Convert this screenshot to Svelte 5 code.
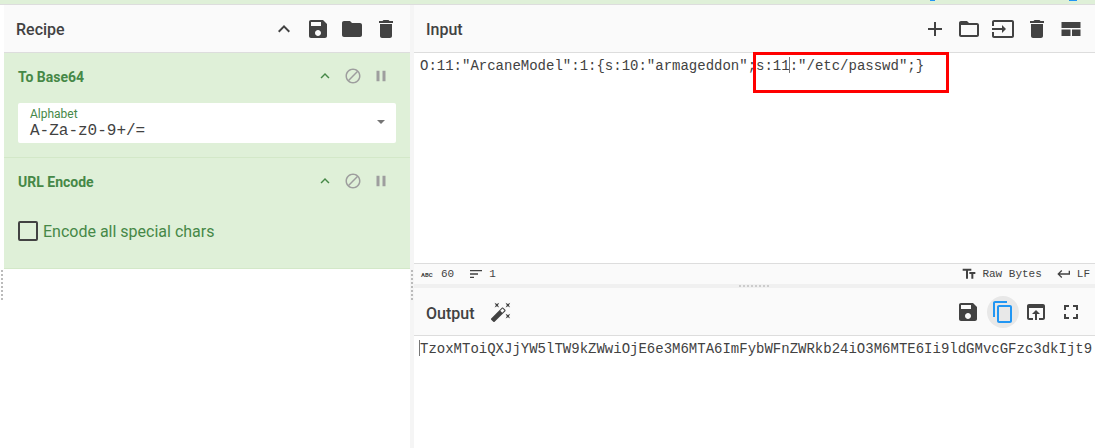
<script>
  const icons = {
    save: 'M17 3H5c-1.11 0-2 .9-2 2v14c0 1.1.89 2 2 2h14c1.1 0 2-.9 2-2V7l-4-4zm-5 16c-1.66 0-3-1.34-3-3s1.34-3 3-3 3 1.34 3 3-1.34 3-3 3zm3-10H5V5h10v4z',
    folder: 'M10 4H4c-1.1 0-1.99.9-1.99 2L2 18c0 1.1.9 2 2 2h16c1.1 0 2-.9 2-2V8c0-1.1-.9-2-2-2h-8l-2-2z',
    folderOpen: 'M20 6h-8l-2-2H4c-1.1 0-1.99.9-1.99 2L2 18c0 1.1.9 2 2 2h16c1.1 0 2-.9 2-2V8c0-1.1-.9-2-2-2zm0 12H4V8h16v10z',
    trash: 'M6 19c0 1.1.9 2 2 2h8c1.1 0 2-.9 2-2V7H6v12zM19 4h-3.5l-1-1h-5l-1 1H5v2h14V4z',
    less: 'M12 8l-6 6 1.41 1.41L12 10.83l4.59 4.58L18 14z',
    block: 'M12 2C6.48 2 2 6.48 2 12s4.48 10 10 10 10-4.48 10-10S17.52 2 12 2zM4 12c0-4.42 3.58-8 8-8 1.85 0 3.55.63 4.9 1.69L5.69 16.9C4.63 15.55 4 13.85 4 12zm8 8c-1.85 0-3.55-.63-4.9-1.69L18.31 7.1C19.37 8.45 20 10.15 20 12c0 4.42-3.58 8-8 8z',
    pause: 'M6 19h4V5H6v14zm8-14v14h4V5h-4z',
    add: 'M19 13h-6v6h-2v-6H5v-2h6V5h2v6h6v2z',
    input: 'M21 3.01H3c-1.1 0-2 .9-2 2V9h2V4.99h18v14.03H3V15H1v4.01c0 1.1.9 1.98 2 1.98h18c1.1 0 2-.88 2-1.98v-14c0-1.11-.9-2-2-2zM11 16l4-4-4-4v3H1v2h10v3z',
    layout: 'M2.5 5h19v6h-19zM2.5 12.5h9V19h-9zM13 12.5h8.5V19H13z',
    copy: 'M16 1H4c-1.1 0-2 .9-2 2v14h2V3h12V1zm3 4H8c-1.1 0-2 .9-2 2v14c0 1.1.9 2 2 2h11c1.1 0 2-.9 2-2V7c0-1.1-.9-2-2-2zm0 16H8V7h11v14z',
    open: 'M19 4H5c-1.11 0-2 .9-2 2v12c0 1.1.89 2 2 2h4v-2H5V8h14v10h-4v2h4c1.1 0 2-.9 2-2V6c0-1.1-.89-2-2-2zm-7 6l-4 4h3v6h2v-6h3l-4-4z',
    full: 'M7 14H5v5h5v-2H7v-3zm-2-4h2V7h3V5H5v5zm12 7h-3v2h5v-5h-2v3zM14 5v2h3v3h2V5h-5z',
    text: 'M2.5 4v3h5v12h3V7h5V4h-13zm19 5h-9v3h3v7h3v-7h3V9z',
    enter: 'M19 7v4H5.83l3.58-3.59L8 6l-6 6 6 6 1.41-1.41L5.83 13H21V7z',
    sort: 'M3 18h6v-2H3v2zM3 6v2h18V6H3zm0 7h12v-2H3v2z',
    wand: 'M7.5 5.6L10 7 8.6 4.5 10 2 7.5 3.4 5 2l1.4 2.5L5 7zm12 9.8L17 14l1.4 2.5L17 19l2.5-1.4L22 19l-1.4-2.5L22 14zM22 2l-2.5 1.4L17 2l1.4 2.5L17 7l2.5-1.4L22 7l-1.4-2.5zm-7.63 5.29c-.39-.39-1.02-.39-1.41 0L1.29 18.96c-.39.39-.39 1.02 0 1.41l2.34 2.34c.39.39 1.02.39 1.41 0L16.7 11.05c.39-.39.39-1.02 0-1.41l-2.33-2.35zm-1.03 5.49l-2.12-2.12 2.44-2.44 2.12 2.12-2.44 2.44z',
  };
</script>

{#snippet icon(name, size = 24, cls = '')}
  <svg class={cls} width={size} height={size} viewBox="0 0 24 24" fill="currentColor"><path d={icons[name]} /></svg>
{/snippet}

{#snippet opControls()}
  <div class="op-controls">
    {@render icon('less', 18, 'op-less')}
    {@render icon('block', 18, 'op-off')}
    {@render icon('pause', 18, 'op-off')}
  </div>
{/snippet}

<div class="top-strip">
  <span class="blip blip-a"></span>
  <span class="blip blip-b"></span>
</div>

<div class="workspace">
  <section class="recipe">
    <header class="title-bar">
      <h2>Recipe</h2>
      <div class="btns recipe-btns">
        {@render icon('less', 24)}
        {@render icon('save', 24)}
        {@render icon('folder', 24)}
        {@render icon('trash', 24)}
      </div>
    </header>

    <div class="op op-first">
      <div class="op-head">
        <span class="op-name">To Base64</span>
        {@render opControls()}
      </div>
      <div class="select">
        <span class="select-label">Alphabet</span>
        <span class="select-value">A-Za-z0-9+/=</span>
        <span class="caret"></span>
      </div>
    </div>

    <div class="op op-second">
      <div class="op-head">
        <span class="op-name">URL Encode</span>
        {@render opControls()}
      </div>
      <label class="check">
        <span class="box"></span>
        <span>Encode all special chars</span>
      </label>
    </div>
    <div class="dots"></div>
  </section>

  <div class="gutter"><div class="dots"></div></div>

  <section class="io">
    <header class="title-bar">
      <h2>Input</h2>
      <div class="btns input-btns">
        {@render icon('add', 24)}
        {@render icon('folderOpen', 24)}
        {@render icon('input', 24)}
        {@render icon('trash', 24)}
        {@render icon('layout', 24)}
      </div>
    </header>

    <div class="editor input-editor">
      <span class="code">O:11:"ArcaneModel":1:&#123;s:10:"armageddon";s:11<span class="cursor"></span>:"/etc/passwd";&#125;</span>
      <div class="highlight"></div>
    </div>

    <div class="status">
      <div class="status-side">
        <span class="abc">ABC</span>
        <span class="stat-num">60</span>
        {@render icon('sort', 16, 'sort')}
        <span>1</span>
      </div>
      <div class="status-side">
        {@render icon('text', 16)}
        <span class="raw">Raw Bytes</span>
        {@render icon('enter', 16)}
        <span>LF</span>
      </div>
    </div>

    <div class="h-gutter"><span class="h-dots"></span></div>

    <header class="title-bar output-bar">
      <div class="output-left">
        <h2>Output</h2>
        {@render icon('wand', 22)}
      </div>
      <div class="btns output-btns">
        {@render icon('save', 24)}
        <span class="copy-btn">{@render icon('copy', 24)}</span>
        {@render icon('open', 24, 'open-icon')}
        {@render icon('full', 24, 'full-icon')}
      </div>
    </header>

    <div class="editor output-editor">
      <span class="code"><span class="cursor"></span>TzoxMToiQXJjYW5lTW9kZWwiOjE6e3M6MTA6ImFybWFnZWRkb24iO3M6MTE6Ii9ldGMvcGFzc3dkIjt9</span>
    </div>
  </section>
</div>

<style>
  :global(body) {
    margin: 0;
    background: #fff;
    overflow: hidden;
  }

  .top-strip {
    position: relative;
    height: 4px;
    background: #dff0d8;
    border-bottom: 1px solid #ddd;
  }
  .blip {
    position: absolute;
    top: 0;
    height: 1px;
    background: #2196f3;
  }
  .blip-a { left: 930px; width: 5px; }
  .blip-b { left: 1069px; width: 8px; }

  .workspace {
    display: grid;
    grid-template-columns: 410px 4px 1fr;
    height: 443px;
    font-family: Roboto, sans-serif;
  }

  .recipe {
    position: relative;
    padding-left: 4px;
    display: flex;
    flex-direction: column;
  }

  .title-bar {
    height: 47px;
    flex: none;
    display: flex;
    align-items: center;
    justify-content: space-between;
    background: #fafafa;
    border-bottom: 1px solid #ddd;
    padding-left: 12px;
    color: #424242;
  }
  h2 {
    margin: 0;
    padding-top: 3px;
    font-size: 16px;
    font-weight: 500;
    color: #424242;
    line-height: 20px;
  }

  .btns { display: flex; align-items: center; }
  .recipe-btns { gap: 10px; padding-right: 12px; }
  .input-btns { gap: 10px; padding-right: 12px; padding-top: 1px; }
  .output-btns { gap: 7px; padding-right: 12px; }
  .output-btns :global(.open-icon) { margin-left: -2px; }
  .output-btns :global(.full-icon) { margin-left: 4px; }
  .output-left { display: flex; align-items: center; gap: 16px; }
  .output-bar h2 { padding-top: 4px; }

  .op {
    background: #dff0d8;
    border-bottom: 1px solid #d3e8c8;
    color: #468847;
  }
  .op-first { height: 104px; }
  .op-second { height: 110px; }

  .op-head {
    display: flex;
    align-items: center;
    justify-content: space-between;
    height: 20px;
    padding: 14px 20px 0 14px;
  }
  .op-name {
    font-size: 14px;
    font-weight: 700;
    color: #468847;
  }
  .op-controls { display: flex; align-items: center; gap: 10px; margin-top: -2px; }
  .op-controls :global(.op-less) { color: #468847; }
  .op-controls :global(.op-off) { color: #9e9e9e; }

  .select {
    position: relative;
    display: flex;
    flex-direction: column;
    margin: 16px 14px 0;
    height: 40px;
    background: #fff;
    border-radius: 2px;
    padding-left: 12px;
    box-sizing: border-box;
  }
  .select-label {
    font-size: 12px;
    line-height: 14px;
    padding-top: 4px;
    color: #468847;
  }
  .select-value {
    font-family: "Liberation Mono", monospace;
    font-size: 16px;
    line-height: 16px;
    padding-top: 2px;
    color: #424242;
  }
  .caret {
    position: absolute;
    right: 11px;
    top: 17px;
    border-left: 4px solid transparent;
    border-right: 4px solid transparent;
    border-top: 4px solid #757575;
  }

  .check {
    display: flex;
    align-items: center;
    gap: 5px;
    margin: 29px 14px 0;
    font-size: 16px;
    color: #468847;
  }
  .box {
    width: 16px;
    height: 16px;
    border: 2px solid #424242;
    border-radius: 2px;
  }

  .dots {
    position: absolute;
    left: 1px;
    top: 265px;
    width: 2px;
    height: 32px;
    background: repeating-linear-gradient(to bottom, #bbb 0 2px, transparent 2px 4px);
  }
  .gutter {
    position: relative;
    background: #f5f5f5;
  }

  .io {
    display: flex;
    flex-direction: column;
    min-width: 0;
  }

  .editor {
    position: relative;
    padding: 2px 6px 0;
    color: #424242;
  }
  .input-editor {
    height: 208px;
    box-sizing: border-box;
    flex: none;
    margin-bottom: 2px;
  }
  .output-editor { flex: 1; }
  .code {
    font-family: "Liberation Mono", monospace;
    font-size: 14px;
    line-height: 19px;
    white-space: pre;
  }
  .cursor {
    display: inline-block;
    width: 1px;
    height: 16px;
    margin-left: -1px;
    background: #777;
    vertical-align: -3px;
  }

  .highlight {
    position: absolute;
    left: 339px;
    top: -1px;
    width: 190px;
    height: 35px;
    border: 3px solid #f00;
  }

  .status {
    height: 20px;
    flex: none;
    display: flex;
    align-items: center;
    justify-content: space-between;
    background: #fafafa;
    border-top: 1px solid #ddd;
    padding: 0 5px 0 7px;
    font-family: "Liberation Mono", monospace;
    font-size: 11px;
    color: #424242;
  }
  .status-side { display: flex; align-items: center; gap: 5px; }
  .abc {
    font-family: Roboto, sans-serif;
    font-size: 6px;
    font-weight: 700;
    width: 15px;
  }
  .stat-num { margin-right: 9px; }
  .raw { margin-right: 9px; }

  .h-gutter {
    height: 4px;
    flex: none;
    background: #f0f0f0;
    display: flex;
    justify-content: center;
    align-items: center;
  }
  .h-dots {
    width: 32px;
    height: 2px;
    background: repeating-linear-gradient(to right, #ccc 0 2px, transparent 2px 4px);
  }

  .copy-btn {
    display: flex;
    align-items: center;
    justify-content: center;
    width: 32px;
    height: 32px;
    border-radius: 50%;
    background: #e8e8e8;
    color: #2196f3;
  }
</style>
